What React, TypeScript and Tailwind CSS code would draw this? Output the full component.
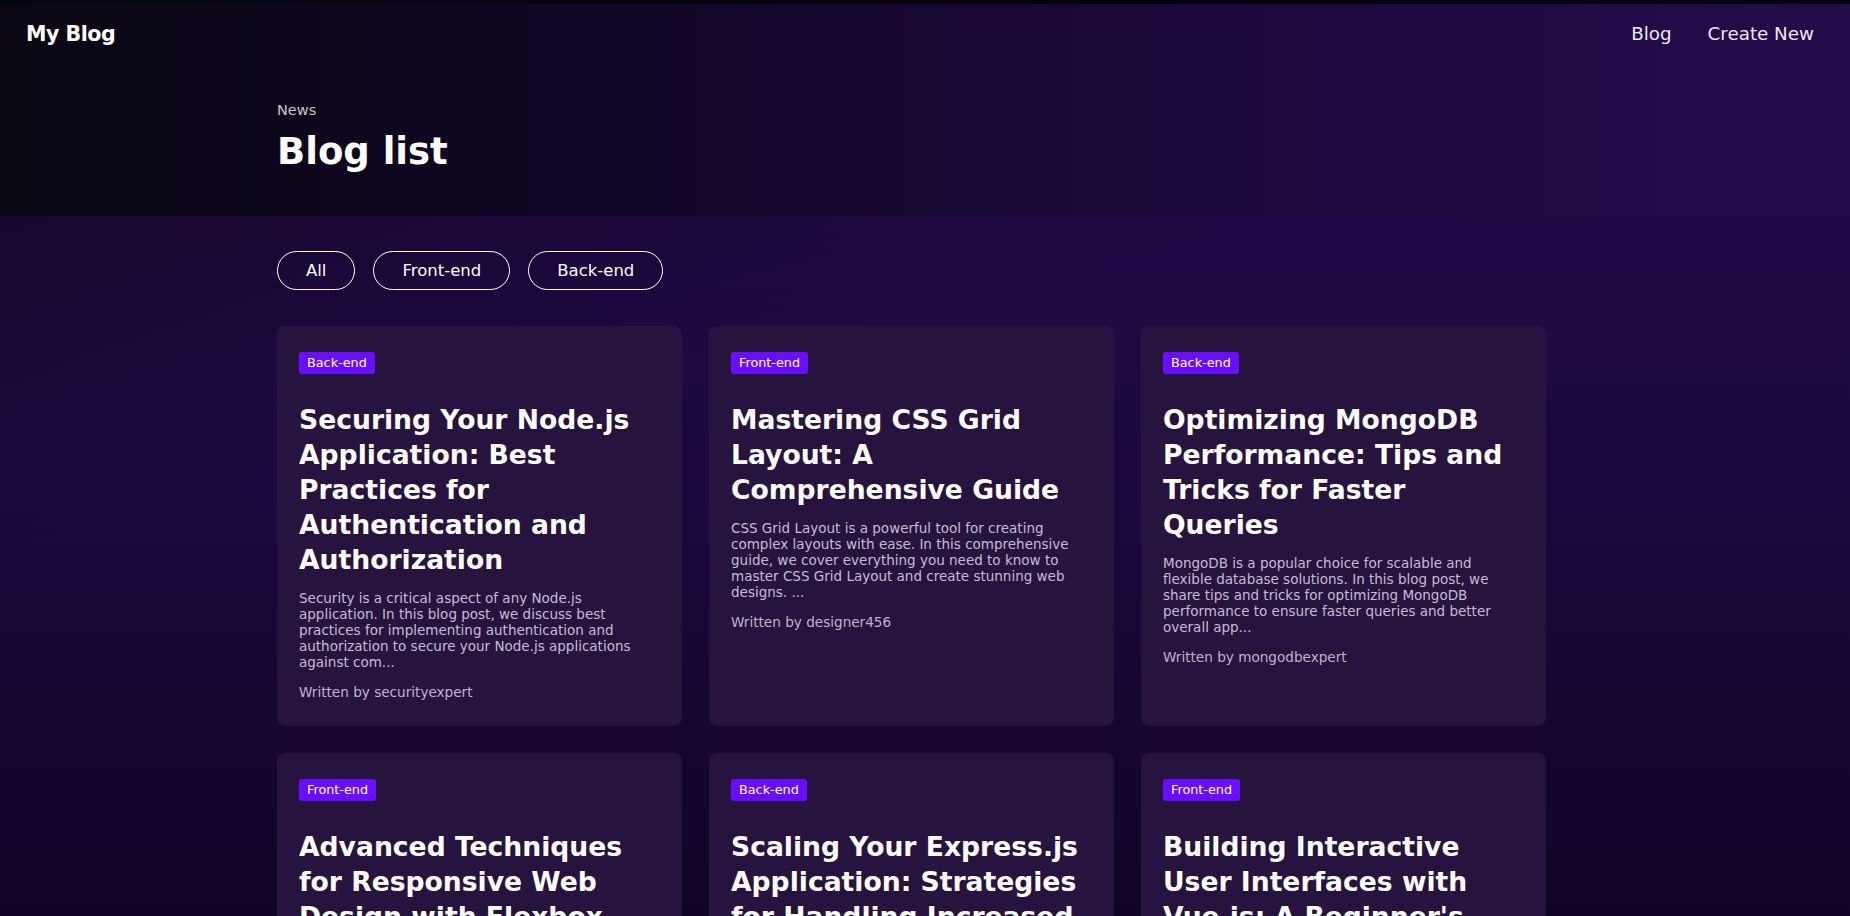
import React, { useState } from 'react';

type Category = 'Front-end' | 'Back-end';

interface Post {
  id: number;
  title: string;
  excerpt: string;
  author: string;
  category: Category;
}

const posts: Post[] = [
  {
    id: 1,
    title: 'Securing Your Node.js Application: Best Practices for Authentication and Authorization',
    excerpt:
      'Security is a critical aspect of any Node.js application. In this blog post, we discuss best practices for implementing authentication and authorization to secure your Node.js applications against com...',
    author: 'securityexpert',
    category: 'Back-end',
  },
  {
    id: 2,
    title: 'Mastering CSS Grid Layout: A Comprehensive Guide',
    excerpt:
      'CSS Grid Layout is a powerful tool for creating complex layouts with ease. In this comprehensive guide, we cover everything you need to know to master CSS Grid Layout and create stunning web designs. ...',
    author: 'designer456',
    category: 'Front-end',
  },
  {
    id: 3,
    title: 'Optimizing MongoDB Performance: Tips and Tricks for Faster Queries',
    excerpt:
      'MongoDB is a popular choice for scalable and flexible database solutions. In this blog post, we share tips and tricks for optimizing MongoDB performance to ensure faster queries and better overall app...',
    author: 'mongodbexpert',
    category: 'Back-end',
  },
  {
    id: 4,
    title: 'Advanced Techniques for Responsive Web Design with Flexbox',
    excerpt:
      'Flexbox makes building responsive layouts simple. In this post, we explore advanced techniques for aligning, ordering and sizing elements so your designs look great on every screen size...',
    author: 'frontendguru',
    category: 'Front-end',
  },
  {
    id: 5,
    title: 'Scaling Your Express.js Application: Strategies for Handling Increased Traffic',
    excerpt:
      'As your application grows, so does the traffic it has to handle. We look at caching, load balancing and clustering strategies to keep your Express.js app fast and reliable under hea...',
    author: 'backenddev',
    category: 'Back-end',
  },
  {
    id: 6,
    title: "Building Interactive User Interfaces with Vue.js: A Beginner's Guide",
    excerpt:
      'Vue.js is a progressive framework for building user interfaces. This beginner friendly guide walks you through components, reactivity and directives to build your first interactive a...',
    author: 'vuefan',
    category: 'Front-end',
  },
];

const filters: ('All' | Category)[] = ['All', 'Front-end', 'Back-end'];

export default function App() {
  const [active, setActive] = useState<'All' | Category>('All');

  const visible = active === 'All' ? posts : posts.filter((p) => p.category === active);

  return (
    <div className="min-h-screen bg-fixed bg-[linear-gradient(165deg,rgba(12,6,22,0.75)_0%,rgba(12,6,22,0)_40%),linear-gradient(180deg,#220a48_0%,#1c0841_45%,#120427_100%)] font-['DejaVu_Sans',sans-serif] text-white">
      {/* Hero / header */}
      <div className="border-t-4 border-[#05050f] bg-[linear-gradient(90deg,#0a0712_0%,#0f0620_25%,#170733_50%,#1e0940_75%,#240b4a_100%)]">
        <nav className="flex h-[60px] items-center justify-between pl-[26px] pr-[36px]">
          <a className="text-[20.6px] font-bold tracking-tight">My Blog</a>
          <div className="flex items-center gap-[36px] text-[18.3px] text-[#ece8f3]">
            <a>Blog</a>
            <a>Create New</a>
          </div>
        </nav>
        <div className="pl-[277px] pt-[36px] pb-[42px]">
          <p className="text-[14.5px] leading-[20px] text-[#c9c4d2]">News</p>
          <h1 className="mt-[10px] text-[37px] leading-[44px] font-bold">Blog list</h1>
        </div>
      </div>

      <main className="pl-[277px] pt-[35px] pb-16">
        <div className="flex gap-[18px]">
          {filters.map((f) => (
            <button
              key={f}
              onClick={() => setActive(f)}
              className={`h-[39px] rounded-full border px-[28px] pt-[2px] text-[16.5px] transition-colors ${
                active === f && f !== 'All' ? 'border-[#6a0dff] bg-[#6a0dff]' : 'border-white'
              }`}
            >
              {f}
            </button>
          ))}
        </div>

        <div className="mt-[36px] grid grid-cols-[repeat(3,405px)] gap-x-[27px] gap-y-[27px]">
          {visible.map((post) => (
            <article
              key={post.id}
              className="flex flex-col rounded-lg bg-[#26143f] px-[22px] pt-[26px] pb-[24px]"
            >
              <span className="self-start rounded-[3px] bg-[#6a0dff] px-[8px] text-[12.8px] leading-[22px]">
                {post.category}
              </span>
              <h2 className="mt-[28px] text-[26.6px] leading-[35px] font-bold">{post.title}</h2>
              <p className="mt-[13px] text-[13.5px] leading-[16px] text-[#c4bdd2]">{post.excerpt}</p>
              <p className="mt-[12px] text-[13.6px] leading-[20px] text-[#bdb5ca]">Written by {post.author}</p>
            </article>
          ))}
        </div>
      </main>
    </div>
  );
}
